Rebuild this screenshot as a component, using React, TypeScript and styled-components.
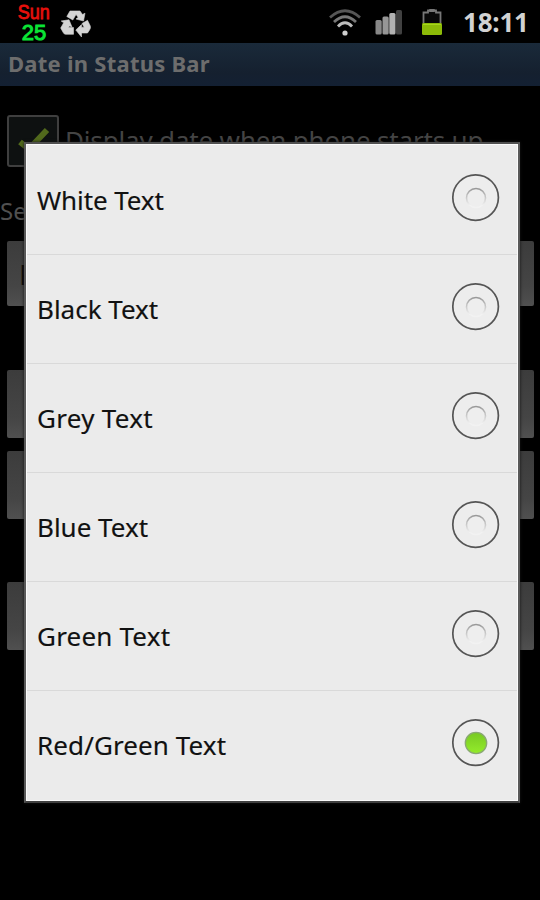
import React from "react";
import styled, { createGlobalStyle } from "styled-components";

const GlobalStyle = createGlobalStyle`
  * { box-sizing: border-box; }
  body { margin: 0; background: #000; font-family: "Noto Sans", "Open Sans", sans-serif; }
`;

const Screen = styled.div`
  position: relative;
  width: 540px;
  height: 900px;
  overflow: hidden;
  background: #000;
`;

const StatusBar = styled.header`
  display: flex;
  align-items: center;
  justify-content: space-between;
  height: 43px;
  padding: 0 11px 0 18px;
`;

const StatusGroup = styled.div`
  display: flex;
  align-items: center;
`;

const DateBadge = styled.div`
  display: flex;
  flex-direction: column;
  align-items: center;
  width: 32px;
  height: 43px;
  padding-top: 1px;
  margin-right: 10px;
  font-family: "Liberation Sans", Arial, sans-serif;
`;

const DayName = styled.span`
  color: #e8100c;
  font-size: 20px;
  line-height: 22px;
  transform: scaleX(0.9);
  -webkit-text-stroke: 0.8px currentColor;
`;

const DayNumber = styled.span`
  color: #0be536;
  font-size: 22px;
  line-height: 20px;
  -webkit-text-stroke: 1px currentColor;
`;

const RecycleIcon = styled.svg`
  width: 31px;
  height: 28px;
  margin-top: 4px;
`;

const Clock = styled.time`
  width: 66px;
  margin-left: 20px;
  color: #d2d2d2;
  font-size: 26px;
  font-weight: 700;
  line-height: 36px;
  white-space: nowrap;
  letter-spacing: -0.2px;
`;

const TitleBar = styled.div`
  height: 43px;
  padding-left: 8px;
  background: linear-gradient(#1a2a3a, #15202f 70%, #132033);
  color: #6d6d6d;
  font-size: 22px;
  font-weight: 700;
  line-height: 40px;
  letter-spacing: 0.25px;
  white-space: nowrap;
`;

const Settings = styled.main`
  padding: 29px 6px 0 7px;
`;

const CheckRow = styled.div`
  display: flex;
  align-items: center;
  height: 52px;
  gap: 6px;
`;

const CheckBox = styled.div`
  width: 52px;
  height: 52px;
  border: 2px solid #3f3f3f;
  border-radius: 3px;
  background: #0e1111;
`;

const CheckLabel = styled.span`
  margin-top: -2px;
  color: #444;
  font-size: 26px;
  line-height: 36px;
  letter-spacing: -0.17px;
  white-space: nowrap;
`;

const SelectLabel = styled.div`
  height: 74px;
  margin-left: -7px;
  padding-top: 28px;
  color: #505050;
  font-size: 24px;
  line-height: 32px;
`;

const DimButton = styled.div<{ $height: number; $gap: number }>`
  display: flex;
  align-items: center;
  height: ${(p) => p.$height}px;
  margin-bottom: ${(p) => p.$gap}px;
  padding-left: 12px;
  border-radius: 2px;
  color: #090909;
  font-family: "Open Sans", sans-serif;
  font-size: 28px;
  background: linear-gradient(#3c3c3c, #454545 70%, #505050);
`;

const Dialog = styled.div`
  position: absolute;
  left: 24px;
  top: 142px;
  width: 496px;
  height: 661px;
  border: 2px solid #595959;
  border-top-color: #505050;
  border-bottom-color: #414141;
  background: #ebebeb;
  box-shadow: inset 0 0 0 1px #fafafa, 0 0 3px #151515;
  padding: 1px;
`;

const Option = styled.div`
  display: flex;
  align-items: center;
  justify-content: space-between;
  height: 109px;
  padding: 0 16px 0 10px;
  & + & { box-shadow: inset 0 1px 0 #d9d9d9; }
`;

const OptionText = styled.span<{ $spacing: number }>`
  padding-top: 1px;
  color: #111;
  font-size: 26px;
  line-height: 36px;
  letter-spacing: ${(p) => p.$spacing}px;
  white-space: nowrap;
  -webkit-text-stroke: 0.15px currentColor;
`;

const RadioIcon = styled.svg`
  width: 50px;
  height: 50px;
  margin-bottom: 4px;
`;

const options = [
  { label: "White Text", spacing: -0.1 },
  { label: "Black Text", spacing: 0 },
  { label: "Grey Text", spacing: 0.3 },
  { label: "Blue Text", spacing: 0 },
  { label: "Green Text", spacing: 0.2 },
  { label: "Red/Green Text", spacing: 0.1, selected: true },
];

function Radio({ selected }: { selected?: boolean }) {
  return (
    <RadioIcon viewBox="0 0 50 50">
      <defs>
        <linearGradient id="ring" x1="0" y1="0" x2="0" y2="1">
          <stop offset="0" stopColor="#999" />
          <stop offset="0.5" stopColor="#ccc" />
          <stop offset="0.9" stopColor="#f2f2f2" />
        </linearGradient>
        <linearGradient id="dot" x1="0" y1="0" x2="0" y2="1">
          <stop offset="0" stopColor="#78c923" />
          <stop offset="1" stopColor="#94ec2b" />
        </linearGradient>
      </defs>
      <circle cx="24.6" cy="24.6" r="22.8" fill="#ededed" stroke="#555" strokeWidth="1.7" />
      {selected ? (
        <circle cx="25" cy="25" r="10.7" fill="url(#dot)" stroke="#8aa873" strokeWidth="1.3" />
      ) : (
        <circle cx="25" cy="25" r="9.5" fill="#eee" stroke="url(#ring)" strokeWidth="1.6" />
      )}
    </RadioIcon>
  );
}

function Recycle() {
  return (
    <RecycleIcon viewBox="0 0 31 28" fill="#d4d4d4" stroke="#d4d4d4" strokeWidth="0.6" strokeLinejoin="round">
      <path d="M10 1H20L22.5 4.5L25 3.2L23.5 11L16 9L18.2 7.3L16 4.5L12.8 10L6.8 6.5Z" />
      <path d="M22 13.5L27.5 10.3L30.3 16Q31 18 29.5 20L27.5 23H21.5V27L15.8 20L21.5 14.6V17.2H24.2Z" />
      <path d="M1.2 11L9 9.8L12 17L9.5 15.9L8.5 17.5H13.5V24.3H5.5Q4 24.3 3.2 22.5L0.7 18L3.7 12.8Z" />
    </RecycleIcon>
  );
}

function Wifi() {
  return (
    <svg width="34" height="30" viewBox="0 0 34 30" fill="none">
      <path d="M2 10.5Q17-3 32 10.5" stroke="#565656" strokeWidth="2.8" />
      <path d="M6 15Q17 4.5 28 15" stroke="#777" strokeWidth="2.8" />
      <path d="M10 19.5Q17 12 24 19.5" stroke="#bcbcbc" strokeWidth="2.8" />
      <circle cx="17" cy="26" r="2.6" fill="#d0d0d0" />
    </svg>
  );
}

const SignalIcon = styled.svg`
  margin-left: 13px;
`;

const BatteryIcon = styled.svg`
  margin-left: 18px;
`;

export default function App() {
  return (
    <Screen>
      <GlobalStyle />
      <StatusBar>
        <StatusGroup>
          <DateBadge>
            <DayName>Sun</DayName>
            <DayNumber>25</DayNumber>
          </DateBadge>
          <Recycle />
        </StatusGroup>
        <StatusGroup>
          <Wifi />
          <SignalIcon width="28" height="26" viewBox="0 0 28 26">
            <rect x="0.5" y="11" width="6.2" height="14.5" rx="1.5" fill="#888" />
            <rect x="7.5" y="7.5" width="6.2" height="18" rx="1.5" fill="#969696" />
            <rect x="14.3" y="4" width="6.2" height="21.5" rx="1.5" fill="#b2b2b2" />
            <rect x="21" y="1" width="6" height="24.5" rx="1.5" fill="#414141" />
          </SignalIcon>
          <BatteryIcon width="22" height="30" viewBox="0 0 22 30">
            <path d="M2.5 17V5.5H7V3.5H15V5.5H19.5V17" fill="#080808" stroke="#777" strokeWidth="1.8" />
            <rect x="8" y="2" width="6" height="3" rx="1" fill="#777" />
            <rect x="1" y="16" width="20" height="12" rx="1.5" fill="#8cba08" />
            <path d="M2 17.5H20" stroke="#a6d61b" />
          </BatteryIcon>
          <Clock>18:11</Clock>
        </StatusGroup>
      </StatusBar>
      <TitleBar>Date in Status Bar</TitleBar>
      <Settings>
        <CheckRow>
          <CheckBox>
            <svg width="48" height="48" viewBox="0 0 48 48">
              <path d="M11 25L20 32L38 13" fill="none" stroke="#51691c" strokeWidth="6" />
            </svg>
          </CheckBox>
          <CheckLabel>Display date when phone starts up</CheckLabel>
        </CheckRow>
        <SelectLabel>Se</SelectLabel>
        <DimButton $height={65} $gap={64}>R</DimButton>
        <DimButton $height={68} $gap={13} />
        <DimButton $height={68} $gap={63} />
        <DimButton $height={68} $gap={0} />
      </Settings>
      <Dialog>
        {options.map((o) => (
          <Option key={o.label}>
            <OptionText $spacing={o.spacing}>{o.label}</OptionText>
            <Radio selected={o.selected} />
          </Option>
        ))}
      </Dialog>
    </Screen>
  );
}
